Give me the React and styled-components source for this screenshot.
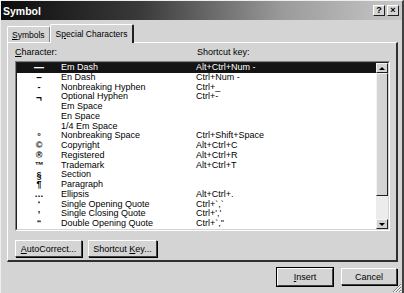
import React from 'react';
import styled, { createGlobalStyle } from 'styled-components';

const GlobalStyle = createGlobalStyle`
  html, body {
    margin: 0;
    padding: 0;
    background: #d4d4d4;
  }
  body {
    font-family: "Liberation Sans", Arial, sans-serif;
    font-size: 9px;
    color: #000;
  }
`;

const rows = [
  { sym: '—', name: 'Em Dash', key: 'Alt+Ctrl+Num -' },
  { sym: '–', name: 'En Dash', key: 'Ctrl+Num -' },
  { sym: '-', name: 'Nonbreaking Hyphen', key: 'Ctrl+_' },
  { sym: '¬', name: 'Optional Hyphen', key: 'Ctrl+-' },
  { sym: '', name: 'Em Space', key: '' },
  { sym: '', name: 'En Space', key: '' },
  { sym: '', name: '1/4 Em Space', key: '' },
  { sym: '°', name: 'Nonbreaking Space', key: 'Ctrl+Shift+Space' },
  { sym: '©', name: 'Copyright', key: 'Alt+Ctrl+C' },
  { sym: '®', name: 'Registered', key: 'Alt+Ctrl+R' },
  { sym: '™', name: 'Trademark', key: 'Alt+Ctrl+T' },
  { sym: '§', name: 'Section', key: '' },
  { sym: '¶', name: 'Paragraph', key: '' },
  { sym: '…', name: 'Ellipsis', key: 'Alt+Ctrl+.' },
  { sym: '‘', name: 'Single Opening Quote', key: 'Ctrl+`,`' },
  { sym: '’', name: 'Single Closing Quote', key: "Ctrl+','" },
  { sym: '“', name: 'Double Opening Quote', key: 'Ctrl+`,"' },
];

const Window = styled.div`
  width: 404px;
  height: 293px;
  box-sizing: border-box;
  border-left: 1px solid #eeeeee;
  border-top: 1px solid #eeeeee;
  border-right: 2px solid #404040;
  display: flex;
  flex-direction: column;
  background: #d4d4d4;
  position: relative;
`;

const TitleBar = styled.div`
  height: 19px;
  display: flex;
  align-items: center;
  padding: 0 3px 0 2px;
  background: linear-gradient(90deg, #0c0c0c 0%, #3a3a3a 35%, #9a9a9a 70%, #c8c8c8 100%);
`;

const Title = styled.span`
  color: #fff;
  font-weight: bold;
  font-size: 10.5px;
  flex: 1;
`;

const CaptionButton = styled.div`
  width: 12px;
  height: 11px;
  margin-left: ${p => (p.gap ? '2px' : '0')};
  box-sizing: border-box;
  background: #d4d4d4;
  border-top: 1px solid #fff;
  border-left: 1px solid #fff;
  border-right: 1px solid #202020;
  border-bottom: 1px solid #202020;
  display: flex;
  align-items: center;
  justify-content: center;
  font-weight: bold;
  font-size: 9px;
  line-height: 1;
`;

const Body = styled.div`
  flex: 1;
  display: flex;
  flex-direction: column;
  padding: 3px 4px 0 6px;
`;

const Tabs = styled.div`
  display: flex;
  align-items: flex-end;
  height: 19px;
  position: relative;
  z-index: 1;
`;

const Tab = styled.div`
  height: ${p => (p.active ? '19px' : '16px')};
  padding: 0 ${p => (p.active ? '5px' : '4px')};
  margin-left: ${p => (p.active ? '-1px' : '0')};
  box-sizing: border-box;
  display: flex;
  align-items: center;
  background: #d4d4d4;
  border-top: 1px solid #fff;
  border-left: 1px solid #fff;
  border-right: 2px solid ${p => (p.active ? '#202020' : '#808080')};
  border-radius: 2px 2px 0 0;
  ${p => (p.active ? 'margin-bottom: -1px;' : '')}
  font-size: 8.5px;
  white-space: nowrap;
`;

const Panel = styled.div`
  height: 220px;
  box-sizing: border-box;
  border-top: 1px solid #fff;
  border-left: 1px solid #fff;
  border-right: 2px solid #303030;
  border-bottom: 2px solid #303030;
  display: flex;
  flex-direction: column;
  padding: 3px 6px 0 7px;
`;

const Labels = styled.div`
  display: flex;
  height: 12px;
  align-items: center;
  margin-bottom: 3px;
`;

const Label = styled.div`
  width: ${p => p.w || 'auto'};
`;

const ListBox = styled.div`
  width: 375px;
  height: 170px;
  box-sizing: border-box;
  border-top: 1px solid #808080;
  border-left: 1px solid #808080;
  border-right: 1px solid #fff;
  border-bottom: 1px solid #fff;
  display: flex;
`;

const ListInner = styled.div`
  flex: 1;
  display: flex;
  border-top: 1px solid #202020;
  border-left: 1px solid #202020;
  border-right: 1px solid #d4d4d4;
  border-bottom: 1px solid #d4d4d4;
  background: #fff;
`;

const Items = styled.div`
  flex: 1;
  display: flex;
  flex-direction: column;
  overflow: hidden;
`;

const Row = styled.div`
  height: 9.76px;
  line-height: 9.76px;
  flex: none;
  display: flex;
  align-items: center;
  background: ${p => (p.selected ? '#141414' : 'transparent')};
  color: ${p => (p.selected ? '#fff' : '#000')};
  white-space: nowrap;
  overflow: hidden;
`;

const SymCell = styled.div`
  width: 44px;
  text-align: center;
  font-size: ${p => (p.big ? '10px' : '9px')};
  font-weight: bold;
  line-height: 9px;
`;

const NameCell = styled.div`
  width: 135px;
`;

const KeyCell = styled.div`
  flex: 1;
`;

const ScrollBar = styled.div`
  width: 12px;
  display: flex;
  flex-direction: column;
  background: #ececec;
`;

const ScrollButton = styled.div`
  height: 10px;
  box-sizing: border-box;
  background: #d4d4d4;
  border-top: 1px solid #f4f4f4;
  border-left: 1px solid #f4f4f4;
  border-right: 1px solid #202020;
  border-bottom: 1px solid #202020;
  display: flex;
  align-items: center;
  justify-content: center;
`;

const Thumb = styled.div`
  height: 123px;
  box-sizing: border-box;
  background: #d4d4d4;
  border-top: 1px solid #f4f4f4;
  border-left: 1px solid #f4f4f4;
  border-right: 1px solid #202020;
  border-bottom: 1px solid #202020;
`;

const Track = styled.div`
  flex: 1;
`;

const Arrow = styled.div`
  width: 0;
  height: 0;
  border-left: 3px solid transparent;
  border-right: 3px solid transparent;
  ${p => (p.down ? 'border-top: 3px solid #000;' : 'border-bottom: 3px solid #000;')}
`;

const ButtonRow = styled.div`
  display: flex;
  gap: 6px;
  margin-top: 9px;
`;

const Button = styled.div`
  width: ${p => p.w}px;
  height: ${p => (p.def ? 18 : 17)}px;
  box-sizing: border-box;
  background: #d4d4d4;
  border-top: 1px solid #fff;
  border-left: 1px solid #fff;
  border-right: 1px solid #404040;
  border-bottom: 1px solid #404040;
  ${p => (p.def ? 'outline: 1px solid #000;' : 'box-shadow: 1px 1px 0 #000;')}
  display: flex;
  align-items: center;
  justify-content: center;
  white-space: pre;
`;

const Footer = styled.div`
  display: flex;
  justify-content: flex-end;
  gap: 8px;
  margin-top: 6px;
  padding-right: 1px;
`;

const Grip = styled.svg`
  position: absolute;
  right: 0;
  bottom: 0;
`;

const U = styled.span`
  text-decoration: underline;
`;

export default function App() {
  return (
    <>
      <GlobalStyle />
      <Window>
        <TitleBar>
          <Title>Symbol</Title>
          <CaptionButton>?</CaptionButton>
          <CaptionButton gap>×</CaptionButton>
        </TitleBar>
        <Body>
          <Tabs>
            <Tab><span><U>S</U>ymbols</span></Tab>
            <Tab active><span>S<U>p</U>ecial Characters</span></Tab>
          </Tabs>
          <Panel>
            <Labels>
              <Label w="182px"><U>C</U>haracter:</Label>
              <Label>Shortcut key:</Label>
            </Labels>
            <ListBox>
              <ListInner>
                <Items>
                  {rows.map((r, i) => (
                    <Row key={i} selected={i === 0}>
                      <SymCell big={i < 2 || i === 3}>{r.sym}</SymCell>
                      <NameCell>{r.name}</NameCell>
                      <KeyCell>{r.key}</KeyCell>
                    </Row>
                  ))}
                </Items>
                <ScrollBar>
                  <ScrollButton><Arrow /></ScrollButton>
                  <Thumb />
                  <Track />
                  <ScrollButton><Arrow down /></ScrollButton>
                </ScrollBar>
              </ListInner>
            </ListBox>
            <ButtonRow>
              <Button w={67}><span><U>A</U>utoCorrect...</span></Button>
              <Button w={69}><span>Shortcut <U>K</U>ey...</span></Button>
            </ButtonRow>
          </Panel>
          <Footer>
            <Button w={56} def><span><U>I</U>nsert</span></Button>
            <Button w={56}>Cancel</Button>
          </Footer>
        </Body>
        <Grip width="11" height="11" viewBox="0 0 11 11">
          <path d="M10 2 L2 10 M10 5 L5 10 M10 8 L8 10" stroke="#808080" strokeWidth="1" />
          <path d="M10 3 L3 10 M10 6 L6 10 M10 9 L9 10" stroke="#fff" strokeWidth="1" />
        </Grip>
      </Window>
    </>
  );
}
